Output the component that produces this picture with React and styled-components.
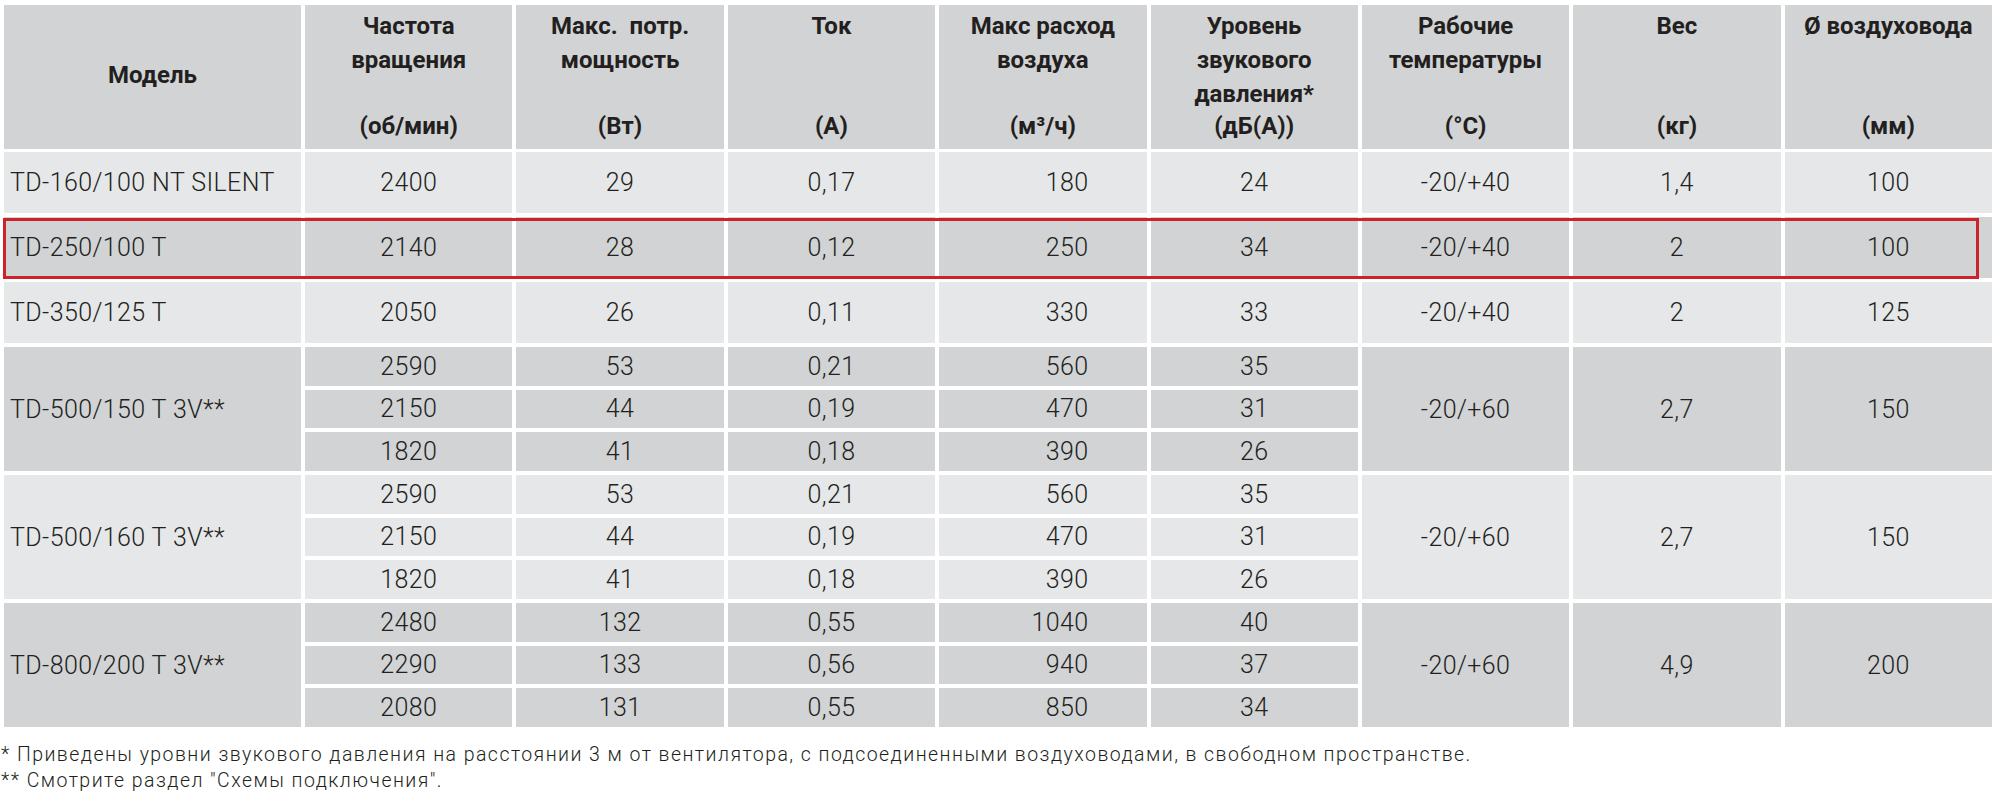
import React from "react";
import styled, { createGlobalStyle, css } from "styled-components";

const COLOR = {
  DARK: "#d1d3d4",
  LIGHT: "#e6e7e8",
  TEXT: "#231f20",
  RED: "#cc2229",
};

const GlobalStyle = createGlobalStyle`
  body {
    margin: 0;
    background: #ffffff;
    color: ${COLOR.TEXT};
    font-family: Roboto, "Liberation Sans", sans-serif;
  }
`;

const Page = styled.div`
  width: 2000px;
  height: 797px;
  padding-top: 5px;
  box-sizing: border-box;
  overflow: hidden;
`;

const Table = styled.div`
  margin-left: 4px;
  width: 1988px;
  display: flex;
  flex-direction: column;
  gap: 4px;
`;

const Row = styled.div`
  position: relative;
  display: grid;
  grid-template-columns: 297px repeat(8, 1fr);
  grid-template-rows: ${(p) => `repeat(${p.$lines || 1}, 1fr)`};
  gap: 4px;
  height: ${(p) => p.$height}px;

  ${(p) =>
    p.$highlight &&
    css`
      &::after {
        content: "";
        position: absolute;
        left: -1px;
        right: 13px;
        top: 1px;
        bottom: -1px;
        border: 3px solid ${COLOR.RED};
        pointer-events: none;
      }
    `}
`;

const HeadCell = styled.div`
  background: ${COLOR.DARK};
  display: flex;
  flex-direction: column;
  justify-content: ${(p) => (p.$centered ? "center" : "space-between")};
  align-items: center;
  text-align: center;
  padding: 4px 0 8px;
  font-weight: 700;
  font-size: 24px;
  white-space: pre;

  .title {
    line-height: 34px;
  }

  .unit {
    line-height: 30px;
  }
`;

const Cell = styled.div`
  grid-row: span ${(p) => p.$span || 1};
  background: ${(p) => (p.$tone === "dark" ? COLOR.DARK : COLOR.LIGHT)};
  display: flex;
  align-items: center;
  justify-content: ${(p) =>
    p.$align === "left" ? "flex-start" : p.$align === "right" ? "flex-end" : "center"};
  padding: ${(p) =>
    p.$align === "left" ? "0 0 0 6px" : p.$align === "right" ? "0 58px 0 0" : "0"};
  font-size: 25px;
  font-weight: 300;
  letter-spacing: 0.4px;
  white-space: nowrap;
`;

const Notes = styled.div`
  margin: 15px 0 0 1px;
  font-size: 19.5px;
  line-height: 26px;
  font-weight: 300;
  letter-spacing: 1.45px;
  white-space: nowrap;
`;

const HEADERS = [
  { title: ["Модель"], centered: true },
  { title: ["Частота", "вращения"], unit: "(об/мин)" },
  { title: ["Макс.  потр.", "мощность"], unit: "(Вт)" },
  { title: ["Ток"], unit: "(А)" },
  { title: ["Макс расход", "воздуха"], unit: "(м³/ч)" },
  { title: ["Уровень", "звукового", "давления*"], unit: "(дБ(А))" },
  { title: ["Рабочие", "температуры"], unit: "(°C)" },
  { title: ["Вес"], unit: "(кг)" },
  { title: ["Ø воздуховода"], unit: "(мм)" },
];

const SINGLE = [
  { tone: "light", values: ["TD-160/100 NT SILENT", "2400", "29", "0,17", "180", "24", "-20/+40", "1,4", "100"] },
  { tone: "dark", highlight: true, values: ["TD-250/100 T", "2140", "28", "0,12", "250", "34", "-20/+40", "2", "100"] },
  { tone: "light", values: ["TD-350/125 T", "2050", "26", "0,11", "330", "33", "-20/+40", "2", "125"] },
];

const MODES_500 = [
  ["2590", "53", "0,21", "560", "35"],
  ["2150", "44", "0,19", "470", "31"],
  ["1820", "41", "0,18", "390", "26"],
];

const GROUPS = [
  { tone: "dark", model: "TD-500/150 T 3V**", modes: MODES_500, shared: ["-20/+60", "2,7", "150"] },
  { tone: "light", model: "TD-500/160 T 3V**", modes: MODES_500, shared: ["-20/+60", "2,7", "150"] },
  {
    tone: "dark",
    model: "TD-800/200 T 3V**",
    modes: [
      ["2480", "132", "0,55", "1040", "40"],
      ["2290", "133", "0,56", "940", "37"],
      ["2080", "131", "0,55", "850", "34"],
    ],
    shared: ["-20/+60", "4,9", "200"],
  },
];

// column 0 is the model (left), column 4 is the air flow (right-aligned)
const alignFor = (col) => (col === 0 ? "left" : col === 4 ? "right" : "center");

function ModeCells({ mode, tone }) {
  return mode.map((v, i) => (
    <Cell key={i} $tone={tone} $align={alignFor(i + 1)}>
      {v}
    </Cell>
  ));
}

function Group({ group }) {
  const { tone, model, modes, shared } = group;
  return (
    <Row $height={124} $lines={3}>
      <Cell $tone={tone} $align="left" $span={3}>
        {model}
      </Cell>
      <ModeCells mode={modes[0]} tone={tone} />
      {shared.map((v, i) => (
        <Cell key={i} $tone={tone} $span={3}>
          {v}
        </Cell>
      ))}
      <ModeCells mode={modes[1]} tone={tone} />
      <ModeCells mode={modes[2]} tone={tone} />
    </Row>
  );
}

export default function App() {
  return (
    <Page>
      <GlobalStyle />
      <Table>
        <Row $height={144} style={{ marginBottom: -1 }}>
          {HEADERS.map((h, i) => (
            <HeadCell key={i} $centered={h.centered}>
              <div className="title">
                {h.title.map((t) => (
                  <div key={t}>{t}</div>
                ))}
              </div>
              {h.unit && <div className="unit">{h.unit}</div>}
            </HeadCell>
          ))}
        </Row>
        {SINGLE.map((r, ri) => (
          <Row key={ri} $height={61} $highlight={r.highlight}>
            {r.values.map((v, i) => (
              <Cell key={i} $tone={r.tone} $align={alignFor(i)}>
                {v}
              </Cell>
            ))}
          </Row>
        ))}
        {GROUPS.map((g) => (
          <Group key={g.model} group={g} />
        ))}
      </Table>
      <Notes>
        <div>
          * Приведены уровни звукового давления на расстоянии 3 м от вентилятора, с подсоединенными
          воздуховодами, в свободном пространстве.
        </div>
        <div>** Смотрите раздел "Схемы подключения".</div>
      </Notes>
    </Page>
  );
}
